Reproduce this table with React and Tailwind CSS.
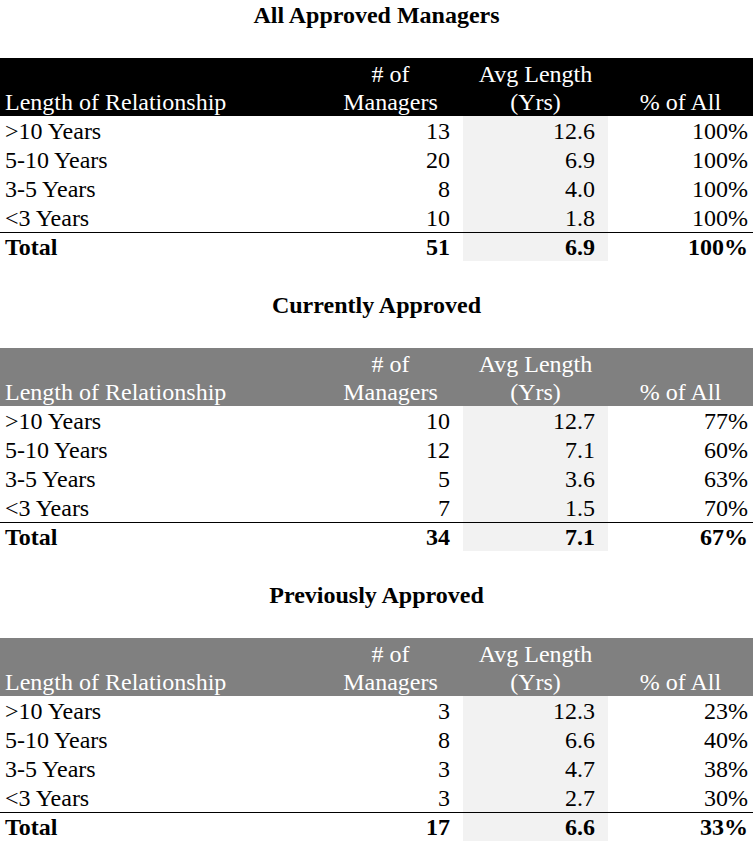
const sections = [
  {
    title: 'All Approved Managers',
    head: 'bg-black',
    rows: [
      ['>10 Years', '13', '12.6', '100%'],
      ['5-10 Years', '20', '6.9', '100%'],
      ['3-5 Years', '8', '4.0', '100%'],
      ['<3 Years', '10', '1.8', '100%'],
    ],
    total: ['51', '6.9', '100%'],
  },
  {
    title: 'Currently Approved',
    head: 'bg-[#808080]',
    rows: [
      ['>10 Years', '10', '12.7', '77%'],
      ['5-10 Years', '12', '7.1', '60%'],
      ['3-5 Years', '5', '3.6', '63%'],
      ['<3 Years', '7', '1.5', '70%'],
    ],
    total: ['34', '7.1', '67%'],
  },
  {
    title: 'Previously Approved',
    head: 'bg-[#808080]',
    rows: [
      ['>10 Years', '3', '12.3', '23%'],
      ['5-10 Years', '8', '6.6', '40%'],
      ['3-5 Years', '3', '4.7', '38%'],
      ['<3 Years', '3', '2.7', '30%'],
    ],
    total: ['17', '6.6', '33%'],
  },
];

function Section({ s }) {
  return (
    <div className="grid grid-cols-[318px_145px_145px_145px]">
      <div className="col-span-4 h-[29px] pt-[2px] leading-[27px] text-center font-bold text-black">{s.title}</div>
      <div className="col-span-4 h-[29px]"></div>
      <div className={`${s.head} h-[58px] flex items-end pl-[5px] text-white leading-[28px]`}>Length of Relationship</div>
      <div className={`${s.head} h-[58px] flex items-end justify-center text-white leading-[28px] text-center`}>
        <span>
          # of
          <br />
          Managers
        </span>
      </div>
      <div className={`${s.head} h-[58px] flex items-end justify-center text-white leading-[28px] text-center`}>
        <span>
          Avg Length
          <br />
          (Yrs)
        </span>
      </div>
      <div className={`${s.head} h-[58px] flex items-end justify-center text-white leading-[28px] text-center`}>
        <span>% of All</span>
      </div>
      {s.rows.map((r, i) => (
        <Row key={i} r={r} />
      ))}
      <div className="h-[29px] leading-[28px] border-t border-black pl-[5px] font-bold">Total</div>
      <div className="h-[29px] leading-[28px] border-t border-black pr-[13px] text-right font-bold">{s.total[0]}</div>
      <div className="h-[29px] leading-[28px] border-t border-black pr-[13px] text-right font-bold bg-[#f2f2f2]">{s.total[1]}</div>
      <div className="h-[29px] leading-[28px] border-t border-black pr-[5px] text-right font-bold">{s.total[2]}</div>
      <div className="col-span-4 h-[29px]"></div>
    </div>
  );
}

function Row({ r }) {
  return (
    <>
      <div className="h-[29px] pt-[2px] leading-[27px] pl-[5px]">{r[0]}</div>
      <div className="h-[29px] pt-[2px] leading-[27px] pr-[13px] text-right">{r[1]}</div>
      <div className="h-[29px] pt-[2px] leading-[27px] pr-[13px] text-right bg-[#f2f2f2]">{r[2]}</div>
      <div className="h-[29px] pt-[2px] leading-[27px] pr-[5px] text-right">{r[3]}</div>
    </>
  );
}

export default function App() {
  return (
    <div className="w-[755px] h-[842px] overflow-hidden bg-white text-black font-['Liberation_Serif',serif] text-[24px]">
      {sections.map((s, i) => (
        <Section key={i} s={s} />
      ))}
    </div>
  );
}
